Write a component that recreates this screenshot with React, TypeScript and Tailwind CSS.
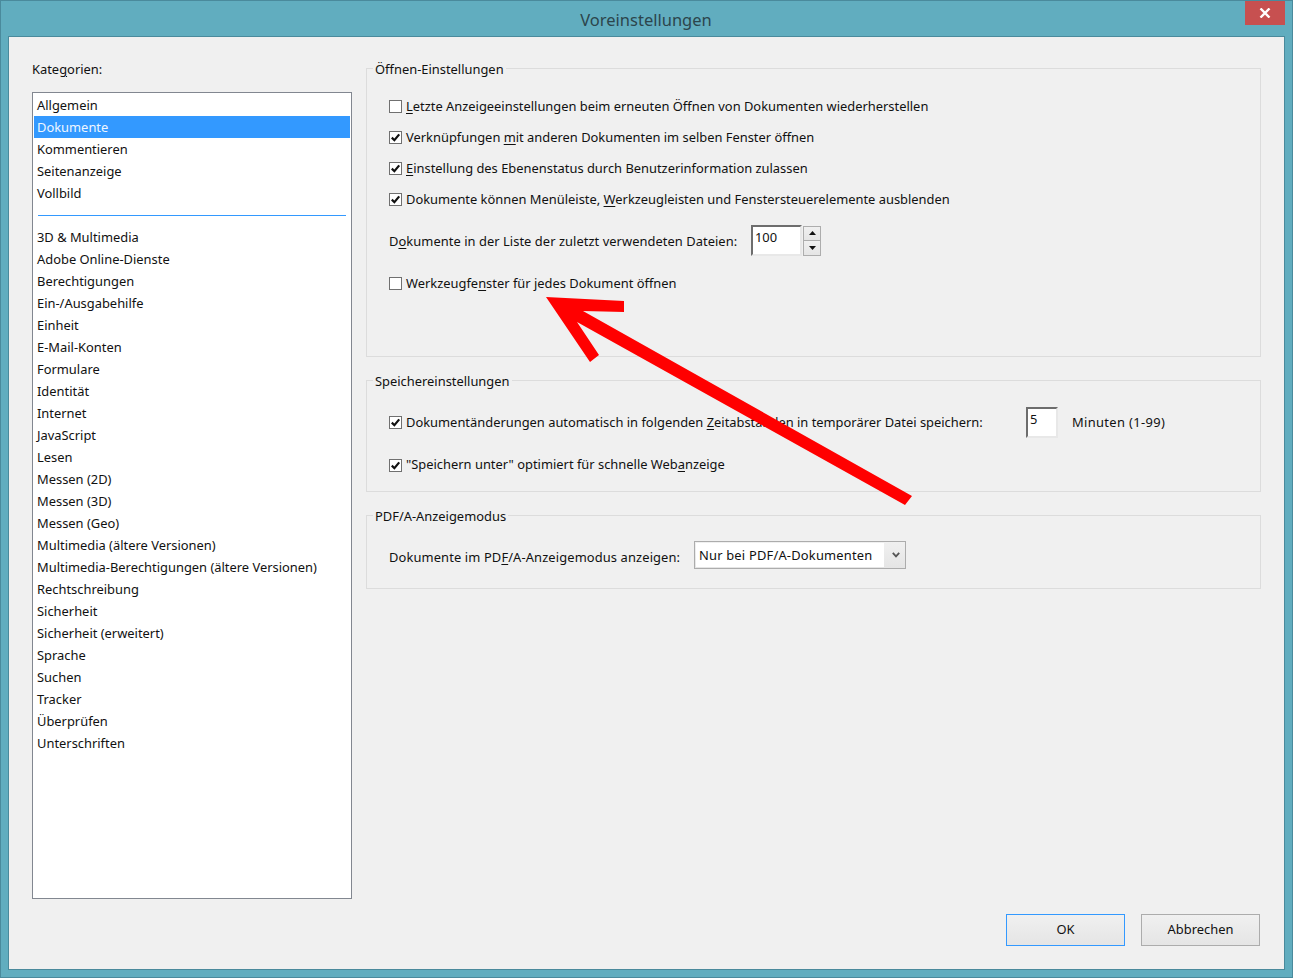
import { ReactNode } from "react";

// "_x" in a label marks the underlined access key
function Mn({ text }: { text: string }) {
  const i = text.indexOf("_");
  if (i < 0) return <>{text}</>;
  return (
    <>
      {text.slice(0, i)}
      <u className="underline underline-offset-2">{text[i + 1]}</u>
      {text.slice(i + 2)}
    </>
  );
}

const TOP_CATEGORIES = ["Allgemein", "Dokumente", "Kommentieren", "Seitenanzeige", "Vollbild"];
const MORE_CATEGORIES = [
  "3D & Multimedia",
  "Adobe Online-Dienste",
  "Berechtigungen",
  "Ein-/Ausgabehilfe",
  "Einheit",
  "E-Mail-Konten",
  "Formulare",
  "Identität",
  "Internet",
  "JavaScript",
  "Lesen",
  "Messen (2D)",
  "Messen (3D)",
  "Messen (Geo)",
  "Multimedia (ältere Versionen)",
  "Multimedia-Berechtigungen (ältere Versionen)",
  "Rechtschreibung",
  "Sicherheit",
  "Sicherheit (erweitert)",
  "Sprache",
  "Suchen",
  "Tracker",
  "Überprüfen",
  "Unterschriften",
];

function Category({ name, selected }: { name: string; selected?: boolean }) {
  return (
    <div className={`h-[22px] pl-[3px] leading-[23px] ${selected ? "bg-[#3399ff] text-[#eef6ff]" : ""}`}>{name}</div>
  );
}

function Checkbox({ checked }: { checked?: boolean }) {
  return (
    <span className="flex h-[13px] w-[13px] shrink-0 items-center justify-center border border-[#707070] bg-white">
      {checked && (
        <svg width="11" height="11" viewBox="0 0 11 11" fill="none">
          <path d="M1.8 5.6 L4.4 8.2 L9.2 2.4" stroke="#111" strokeWidth="2.2" />
        </svg>
      )}
    </span>
  );
}

function CheckRow({ label, checked, className = "h-[31px]" }: { label: string; checked?: boolean; className?: string }) {
  return (
    <div className={`flex items-center gap-[4px] ${className}`}>
      <Checkbox checked={checked} />
      <span>
        <Mn text={label} />
      </span>
    </div>
  );
}

function Group({ title, className, children }: { title: string; className?: string; children: ReactNode }) {
  return (
    <fieldset className={`border border-[#dcdcdc] ${className ?? ""}`}>
      <legend className="ml-[6px] h-[20px] px-[2px] leading-[22px]">{title}</legend>
      <div className="pl-[22px]">{children}</div>
    </fieldset>
  );
}

function NumberBox({ value, className }: { value: string; className: string }) {
  return (
    <div
      className={`h-[31px] border-2 border-t-[#6d6d6d] border-l-[#6d6d6d] border-r-[#e8e8e8] border-b-[#e8e8e8] bg-white pl-[2px] leading-[21px] ${className}`}
    >
      {value}
    </div>
  );
}

function DialogButton({ label, focused }: { label: string; focused?: boolean }) {
  return (
    <button
      type="button"
      className={`h-[32px] w-[119px] border bg-gradient-to-b from-[#f0f0f0] to-[#e5e5e5] ${
        focused ? "border-[#3399ff]" : "border-[#acacac]"
      }`}
    >
      {label}
    </button>
  );
}

export default function App() {
  return (
    <div
      className="relative flex h-[978px] w-[1293px] flex-col overflow-hidden border border-[#4a8a9c] bg-[#61adbf] text-[12.9px] text-[#111] [font-family:'Noto_Sans',sans-serif]"
    >
      <div className="flex h-[35px] shrink-0">
        <div className="flex-1 pl-[46px] text-center text-[16.5px] leading-[37px] text-[#2c454c]">Voreinstellungen</div>
        <div className="mr-[7px] flex h-[24px] w-[40px] items-center justify-center bg-[#c75050]">
          <svg width="12" height="10" viewBox="0 0 12 10">
            <path d="M1.5 0.5 L10.5 9.5 M10.5 0.5 L1.5 9.5" stroke="white" strokeWidth="2.4" />
          </svg>
        </div>
      </div>

      <div className="mr-[7px] ml-[7px] mb-[7px] flex flex-1 flex-col border border-[#4a8a9c] bg-[#f0f0f0] pt-[21px] pr-[23px] pl-[23px]">
        <div className="flex gap-[14px]">
          <div className="w-[320px] shrink-0 pt-px">
            <div className="h-[20px] leading-[20px]">
              <Mn text="Kate_gorien:" />
            </div>
            <div className="mt-[13px] h-[807px] border border-[#828790] bg-white p-px">
              {TOP_CATEGORIES.map((c) => (
                <Category key={c} name={c} selected={c === "Dokumente"} />
              ))}
              <div className="flex h-[22px] items-center px-[4px]">
                <div className="h-px w-full bg-[#3399ff]" />
              </div>
              {MORE_CATEGORIES.map((c) => (
                <Category key={c} name={c} />
              ))}
            </div>
          </div>

          <div className="flex w-[895px] flex-col gap-[13px]">
            <Group title="Öffnen-Einstellungen" className="h-[299px]">
              <div className="pt-[13px]">
                <CheckRow label="_Letzte Anzeigeeinstellungen beim erneuten Öffnen von Dokumenten wiederherstellen" />
                <CheckRow checked label="Verknüpfungen _mit anderen Dokumenten im selben Fenster öffnen" />
                <CheckRow checked label="_Einstellung des Ebenenstatus durch Benutzerinformation zulassen" />
                <CheckRow checked label="Dokumente können Menüleiste, _Werkzeugleisten und Fenstersteuerelemente ausblenden" />
                <div className="mt-[10px] flex h-[31px] items-center">
                  <span className="w-[362px] pt-[2px] tracking-[0.05px]">
                    <Mn text="D_okumente in der Liste der zuletzt verwendeten Dateien:" />
                  </span>
                  <NumberBox value="100" className="w-[51px]" />
                  <div className="ml-[1px] flex w-[18px] flex-col">
                    <div className="flex h-[15px] items-center justify-center border border-[#adadad] bg-gradient-to-b from-[#f0f0f0] to-[#e5e5e5]">
                      <svg width="7" height="4" viewBox="0 0 7 4">
                        <path d="M3.5 0 L7 4 L0 4 Z" fill="#111" />
                      </svg>
                    </div>
                    <div className="flex h-[15px] items-center justify-center border border-t-0 border-[#adadad] bg-gradient-to-b from-[#f0f0f0] to-[#e5e5e5]">
                      <svg width="7" height="4" viewBox="0 0 7 4">
                        <path d="M0 0 L7 0 L3.5 4 Z" fill="#111" />
                      </svg>
                    </div>
                  </div>
                </div>
                <CheckRow label="Werkzeugfe_nster für jedes Dokument öffnen" className="mt-[12px] h-[31px]" />
              </div>
            </Group>

            <Group title="Speichereinstellungen" className="pb-[5px]">
              <div className="pt-[12px]">
                <div className="flex h-[42px] items-center">
                  <CheckRow checked label="Dokumentänderungen automatisch in folgenden _Zeitabständen in temporärer Datei speichern:" className="w-[637px]" />
                  <NumberBox value="5" className="mb-[2px] w-[32px]" />
                  <span className="ml-[14px] tracking-[0.35px]">Minuten (1-99)</span>
                </div>
                <CheckRow checked label={'"Speichern unter" optimiert für schnelle Web_anzeige'} className="h-[42px]" />
              </div>
            </Group>

            <Group title="PDF/A-Anzeigemodus" className="pb-[19px]">
              <div className="flex items-center pt-[16px]">
                <span className="w-[305px] pt-[6px] tracking-[0.12px]">
                  <Mn text="Dokumente im PD_F/A-Anzeigemodus anzeigen:" />
                </span>
                <div className="flex h-[28px] w-[212px] items-center border border-[#acacac] bg-gradient-to-b from-[#f0f0f0] to-[#e5e5e5] p-px">
                  <div className="h-full w-[188px] bg-white pl-[3px] leading-[25px] tracking-[0.2px]">Nur bei PDF/A-Dokumenten</div>
                  <svg className="ml-[8px]" width="8" height="6" viewBox="0 0 8 6" fill="none">
                    <path d="M0.8 0.8 L4 4.4 L7.2 0.8" stroke="#555" strokeWidth="1.8" />
                  </svg>
                </div>
              </div>
            </Group>
          </div>
        </div>

        <div className="mt-[15px] mr-px flex justify-end gap-[16px]">
          <DialogButton label="OK" focused />
          <DialogButton label="Abbrechen" />
        </div>
      </div>

      {/* hand-drawn annotation arrow laid over the dialog */}
      <svg className="pointer-events-none absolute top-[-1px] left-[-1px]" width="1293" height="978" viewBox="0 0 1293 978">
        <polygon
          points="546,297 624,301 624,312 583,311 912,496 905,505 577,322 599,355 590,362"
          fill="#ff0000"
        />
      </svg>
    </div>
  );
}
